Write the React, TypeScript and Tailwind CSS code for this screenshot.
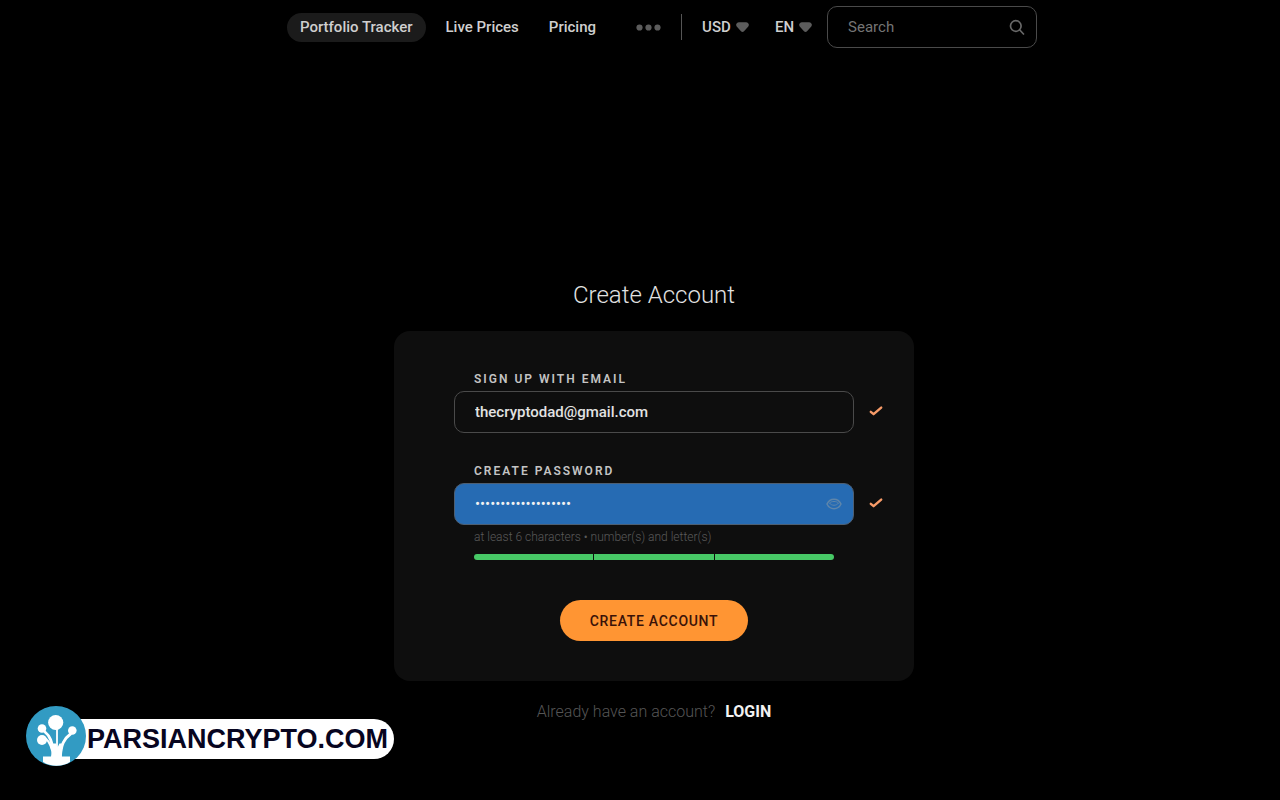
import { useState } from "react";

const links = [
  { label: "Live Prices", href: "#prices" },
  { label: "Pricing", href: "#pricing" },
];

const Caret = () => {
  return (
    <svg
      viewBox="0 0 13 10"
      className="pointer-events-none absolute right-0 w-[13px] h-[10px] fill-[#5c5c5c]"
    >
      <path d="M3 .2C4.500 0 5.300.3 6.500.3S8.500 0 10 .2c2.600.3 3.600 2.500 2.300 4.200L8 9.200c-.8.9-2.200.9-3 0L.7 4.400C-.6 2.700.4.5 3 .2z" />
    </svg>
  );
};

const Check = () => {
  return (
    <svg
      viewBox="0 0 14 12"
      className="absolute left-full ml-[15px] mb-0.5 w-[14px] h-3 fill-none stroke-[#f79b68]"
      strokeWidth="2.4"
      strokeLinecap="round"
      strokeLinejoin="round"
    >
      <path d="M1.800 6.800L4.600 9.200L12.200 2.600" />
    </svg>
  );
};

const Header = () => {
  return (
    <header className="flex justify-center items-center h-[54px] pl-4 text-[15px] font-medium text-[#cfcfcf]">
      <nav className="flex items-center">
        <a
          href="#tracker"
          className="rounded-full bg-[#1b1b1b] px-[13px] py-1 leading-[21px]"
        >
          Portfolio Tracker
        </a>
        <div className="flex gap-[30px] ml-5">
          {links.map((link) => (
            <a key={link.label} href={link.href}>
              {link.label}
            </a>
          ))}
        </div>
        <button type="button" aria-label="More" className="ml-10">
          <svg viewBox="0 0 25 7" className="w-[25px] h-[7px] fill-[#5c5c5c]">
            <circle cx="3.500" cy="3.500" r="3.100" />
            <circle cx="12.500" cy="3.500" r="3.100" />
            <circle cx="21.500" cy="3.500" r="3.100" />
          </svg>
        </button>
      </nav>
      <div className="mx-5 w-px h-[26px] bg-[#555555]" />
      <div className="relative flex items-center">
        <select
          aria-label="Currency"
          className="appearance-none bg-transparent w-[47px] outline-none"
        >
          <option>USD</option>
        </select>
        <Caret />
      </div>
      <div className="relative flex items-center ml-[26px]">
        <select
          aria-label="Language"
          className="appearance-none bg-transparent w-[37px] outline-none"
        >
          <option>EN</option>
        </select>
        <Caret />
      </div>
      <div className="relative flex items-center ml-[15px]">
        <input
          type="text"
          aria-label="Search"
          placeholder="Search"
          className="w-[210px] h-[42px] rounded-[10px] border border-[#4a4a4a] bg-transparent pl-5 pr-10 font-normal outline-none placeholder:text-[#757575]"
        />
        <svg
          viewBox="0 0 16 16"
          className="absolute right-3 size-4 fill-none stroke-[#686868]"
          strokeWidth="1.700"
          strokeLinecap="round"
        >
          <circle cx="6.800" cy="7" r="5.300" />
          <path d="M10.800 11l3.700 4" />
        </svg>
      </div>
    </header>
  );
};

const Badge = () => {
  return (
    <a
      href="#home"
      className="absolute left-[26px] bottom-[34px] flex items-end"
    >
      <svg viewBox="0 0 60 60" className="relative size-[60px]">
        <circle cx="30" cy="30" r="30" fill="#329bc3" />
        <g fill="#ffffff">
          <circle cx="29.700" cy="16.500" r="7.600" />
          <circle cx="16" cy="22.500" r="4.300" />
          <circle cx="16" cy="34" r="5" />
          <circle cx="46.300" cy="24.500" r="4.300" />
          <path d="M17 50.500h8c1-5 0-9-2-13h7l1.500 4 2-4h3.500c-2 4-2 8-1 13h8v5.500c-8 5-19 5-27 0z" />
        </g>
        <g fill="none" stroke="#ffffff" strokeLinecap="round">
          <path d="M19 26c5 4 7 9 8.500 22" strokeWidth="2.800" />
          <path d="M18 32c4 1 6 5 8 12" strokeWidth="2.200" />
          <path d="M31 22v26" strokeWidth="1.800" />
          <path d="M44.500 28c-7 5-9 11-10 21" strokeWidth="2.800" />
        </g>
      </svg>
      <span className="-ml-3 mb-[7px] flex items-center h-10 rounded-r-full bg-white pl-[13px] pr-1.5 font-['Liberation_Sans',Arial,sans-serif] text-[27px] font-bold text-[#07051f]">
        PARSIANCRYPTO.COM
      </span>
    </a>
  );
};

const App = () => {
  const [email, setEmail] = useState("thecryptodad@gmail.com");
  const [password, setPassword] = useState("cryptodad-pass-2021");
  const [visible, setVisible] = useState(false);

  return (
    <div className="relative min-h-screen bg-black pl-7 font-[Roboto,sans-serif]">
      <Header />
      <main className="flex flex-col items-center pt-[225px]">
        <h1 className="text-2xl leading-8 font-light text-[#e2e2e2]">
          Create Account
        </h1>
        <form
          className="mt-5 w-full max-w-[520px] rounded-2xl bg-[#0e0e0e] px-15 py-10"
          onSubmit={(e) => e.preventDefault()}
        >
          <label
            htmlFor="email"
            className="block px-5 mb-1 text-xs leading-4 font-semibold tracking-[2px] text-[#c4c4c4]"
          >
            SIGN UP WITH EMAIL
          </label>
          <div className="relative flex items-center">
            <input
              id="email"
              type="email"
              value={email}
              onChange={(e) => setEmail(e.target.value)}
              className="w-full h-[42px] rounded-[10px] border border-[#4a4a4a] bg-transparent px-5 text-[15px] font-medium text-[#e2e2e2] outline-none"
            />
            <Check />
          </div>

          <label
            htmlFor="password"
            className="block px-5 mt-[30px] mb-1 text-xs leading-4 font-semibold tracking-[2px] text-[#c4c4c4]"
          >
            CREATE PASSWORD
          </label>
          <div className="relative flex items-center">
            <input
              id="password"
              type={visible ? "text" : "password"}
              value={password}
              onChange={(e) => setPassword(e.target.value)}
              className="w-full h-[42px] rounded-[10px] border border-[#4d5f73] bg-[#266bb3] px-5 text-[15px] font-normal text-[#f2f2f2] outline-none"
            />
            <button
              type="button"
              aria-label="Show password"
              className="absolute right-3"
              onClick={() => setVisible(!visible)}
            >
              <svg
                viewBox="0 0 16 12"
                className="w-4 h-3 fill-none stroke-[#5f86ab]"
                strokeWidth="1.500"
              >
                <path d="M1 6c3-6.300 11-6.300 14 0-3 6.300-11 6.300-14 0z" />
                <path d="M3.500 5c2-2 7-2 9 0-2 3-7 3-9 0z" strokeWidth="1" />
              </svg>
            </button>
            <Check />
          </div>
          <p className="px-5 text-xs leading-6 font-light text-[#5a5a5a]">
            at least 6 characters • number(s) and letter(s)
          </p>
          <div className="mx-5 mt-[5px] grid grid-cols-3 gap-px h-1.5 rounded-full overflow-hidden">
            <div className="bg-[#47c966]" />
            <div className="bg-[#47c966]" />
            <div className="bg-[#47c966]" />
          </div>

          <button
            type="submit"
            className="block mx-auto mt-10 h-[41px] rounded-full bg-[#ff9533] px-[30px] text-sm font-medium tracking-wider text-[#3a1208]"
          >
            CREATE ACCOUNT
          </button>
        </form>
        <p className="mt-[19px] text-base leading-6 font-light text-[#555555]">
          Already have an account?
          <a href="#login" className="ml-2.5 font-bold text-[#f2f2f2]">
            LOGIN
          </a>
        </p>
      </main>
      <Badge />
    </div>
  );
};

export default App;
